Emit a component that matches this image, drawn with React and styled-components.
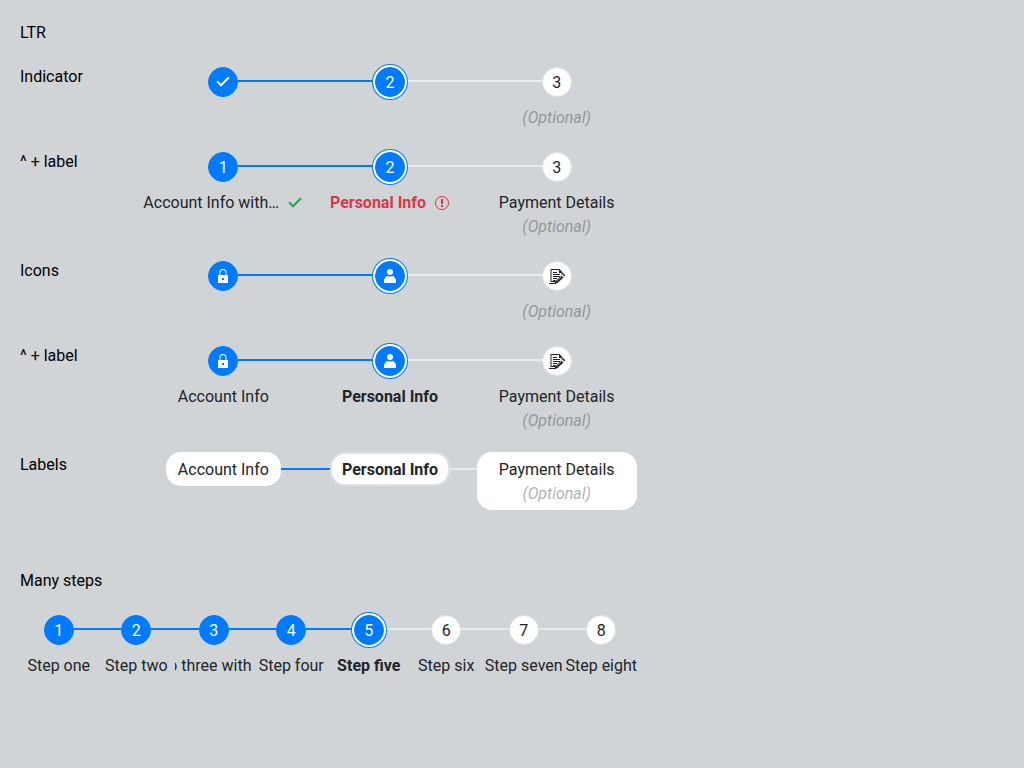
import React from "react";
import styled, { createGlobalStyle, css } from "styled-components";

const color = {
  page: "#d0d4d7",
  primary: "#007bff",
  track: "#e9ecef",
  border: "#dee2e6",
  text: "#212529",
  success: "#28a745",
  error: "#dc3545",
};

const GlobalStyle = createGlobalStyle`
  *, *::before, *::after { box-sizing: border-box; }
  body {
    margin: 0;
    background: ${color.page};
    color: #000;
    font: 16px/24px Roboto, "Liberation Sans", sans-serif;
  }
`;

const Page = styled.main`
  padding: 20px;
`;

const Heading = styled.h2`
  margin: 0 0 18px;
  font-size: 16px;
  font-weight: 400;
  line-height: 26px;
`;

const Row = styled.section`
  display: grid;
  grid-template-columns: 120px minmax(0, 500px);
`;

const RowTitle = styled.h3`
  margin: 0;
  font-size: 16px;
  font-weight: 400;
  line-height: 26px;
`;

const ManySteps = styled.section`
  max-width: 620px;
  margin-top: 58px;
`;

const StepList = styled.ol`
  display: flex;
  margin: 0;
  padding: 0 0 ${(p) => (p.$pills ? 0 : 19)}px;
  list-style: none;
`;

const StepItem = styled.li`
  flex: 1 1 0;
  min-width: 0;
`;

const StepLink = styled.a`
  display: flex;
  flex-direction: column;
  align-items: center;
  color: ${color.text};
  text-decoration: none;
`;

const StepHead = styled.span`
  display: flex;
  align-items: flex-start;
  align-self: stretch;
`;

const Track = styled.span`
  flex: 1;
  height: 2px;
  margin-top: 16px;
  background: ${(p) =>
    p.$state === "none" ? "transparent" : p.$state === "done" ? color.primary : color.track};
`;

const Indicator = styled.span`
  display: flex;
  flex: none;
  align-items: center;
  justify-content: center;
  width: 30px;
  height: 30px;
  margin-top: 3px;
  border: 1px solid ${(p) => (p.$filled ? color.primary : color.border)};
  border-radius: 50%;
  background: ${(p) => (p.$filled ? color.primary : "#fff")};
  color: ${(p) => (p.$filled ? "#fff" : color.text)};
  ${(p) =>
    p.$current &&
    css`
      z-index: 1;
      box-shadow: 0 0 0 2px #fff, 0 0 0 3px ${color.primary};
    `}
`;

const StepNumber = styled.span`
  padding-top: 2px;
`;

const Captions = styled.span`
  display: flex;
  flex-direction: column;
  align-items: center;
  width: 100%;
  max-width: 160px;
  margin-top: 9px;
  overflow: hidden;
`;

const Label = styled.span`
  display: flex;
  align-items: center;
  justify-content: center;
  gap: 8px;
  max-width: 100%;
  white-space: nowrap;
  font-weight: ${(p) => (p.$current ? 700 : 400)};
  color: ${(p) => (p.$error ? color.error : "inherit")};
`;

const LabelText = styled.span`
  ${(p) =>
    p.$ellipsis &&
    css`
      min-width: 0;
      overflow: hidden;
      text-overflow: ellipsis;
    `}
`;

const Optional = styled.span`
  font-style: oblique 20deg;
  opacity: 0.35;
`;

const Pill = styled.span`
  display: flex;
  flex: none;
  flex-direction: column;
  align-items: center;
  width: ${(p) => (p.$wide ? "160px" : "auto")};
  padding: 4px 10px 2px;
  border: 2px solid ${(p) => (p.$current ? color.border : "#fff")};
  border-radius: 15px;
  background: #fff;
`;

const Svg = styled.svg`
  display: block;
  flex: none;
  width: 16px;
  height: 16px;
  color: ${(p) => p.$color || "inherit"};
`;

const glyphs = {
  check: <path d="M2 7.300 6 11.300 14 3.300" fill="none" stroke="currentColor" strokeWidth="2" />,
  lock: (
    <path
      fill="currentColor"
      fillRule="evenodd"
      d="M3 7h1.500V4.500C4.500 2.300 5.800 1 8 1s3.500 1.300 3.500 3.500V7H13v8H3zM5.500 7h5V4.500C10.500 3 9.500 2 8 2S5.500 3 5.500 4.500zM7 10v2h2v-2z"
    />
  ),
  user: (
    <g fill="currentColor">
      <circle cx="8" cy="4" r="3" />
      <path d="M2 15v-2c0-3 2-5 4-5 1 .7 3 .7 4 0 2 0 4 2 4 5v2z" />
    </g>
  ),
  form: (
    <g fill="none" stroke="currentColor">
      <path d="M0 15.500h7M2 13.500h4M2 14V1.500H10.500L13 4.500v2" />
      <path d="M10 1l3.500 4H10z" fill="currentColor" stroke="none" />
      <path d="M4 4.500h4M4 6.500h7M4 8.500h7M4 10.500h4M4 12.500h2" />
      <path d="M13.500 8.500 8 13.500" strokeWidth="3" />
      <path d="m13 6 1-1 2.500 2.500-1 1zM5.500 15.500l1-3.500 3 3z" fill="currentColor" stroke="none" />
      <path d="M12.500 8.500 8 12.800" stroke="#fff" strokeWidth=".5" />
    </g>
  ),
  error: (
    <g fill="none" stroke="currentColor">
      <circle cx="8" cy="8" r="6.500" />
      <path d="M8 4v5M8 10v2" strokeWidth="2" />
    </g>
  ),
};

function Icon({ name, tint }) {
  return (
    <Svg viewBox="0 0 16 16" $color={tint} aria-hidden="true">
      {glyphs[name]}
    </Svg>
  );
}

function Stepper({ steps, current, mode = "indicator", showLabels = false, name }) {
  const pills = mode === "label";
  return (
    <StepList $pills={pills} aria-label={name}>
      {steps.map((step, i) => {
        const isCurrent = i === current;
        const caption = (
          <Label $current={isCurrent} $error={step.status === "error"}>
            <LabelText $ellipsis={Boolean(step.status)}>{step.label}</LabelText>
            {step.status === "valid" && <Icon name="check" tint={color.success} />}
            {step.status === "error" && <Icon name="error" />}
          </Label>
        );
        const optional = step.optional && <Optional>(Optional)</Optional>;
        return (
          <StepItem key={step.label}>
            <StepLink
              href="#"
              aria-label={step.label}
              aria-current={isCurrent ? "step" : undefined}
            >
              <StepHead>
                <Track $state={i === 0 ? "none" : i <= current ? "done" : "todo"} />
                {pills ? (
                  <Pill $current={isCurrent} $wide={step.optional}>
                    {caption}
                    {optional}
                  </Pill>
                ) : (
                  <Indicator $filled={i <= current} $current={isCurrent}>
                    {step.icon ? <Icon name={step.icon} /> : <StepNumber>{i + 1}</StepNumber>}
                  </Indicator>
                )}
                <Track $state={i === steps.length - 1 ? "none" : i < current ? "done" : "todo"} />
              </StepHead>
              {!pills && (showLabels || optional) && (
                <Captions>
                  {showLabels && caption}
                  {optional}
                </Captions>
              )}
            </StepLink>
          </StepItem>
        );
      })}
    </StepList>
  );
}

const account = { label: "Account Info" };
const personal = { label: "Personal Info" };
const payment = { label: "Payment Details", optional: true };

const iconSteps = [
  { ...account, icon: "lock" },
  { ...personal, icon: "user" },
  { ...payment, icon: "form" },
];

const rows = [
  { title: "Indicator", steps: [{ ...account, icon: "check" }, personal, payment] },
  {
    title: "^ + label",
    showLabels: true,
    steps: [
      { label: "Account Info with long label", status: "valid" },
      { ...personal, status: "error" },
      payment,
    ],
  },
  { title: "Icons", steps: iconSteps },
  { title: "^ + label", showLabels: true, steps: iconSteps },
  { title: "Labels", mode: "label", steps: [account, personal, payment] },
];

const manySteps = [
  "Step one",
  "Step two",
  "Step three with text",
  "Step four",
  "Step five",
  "Step six",
  "Step seven",
  "Step eight",
].map((label) => ({ label }));

export default function App() {
  return (
    <>
      <GlobalStyle />
      <Page>
        <Heading>LTR</Heading>
        {rows.map((row, i) => (
          <Row key={i}>
            <RowTitle>{row.title}</RowTitle>
            <Stepper
              name={row.title}
              steps={row.steps}
              current={1}
              mode={row.mode}
              showLabels={row.showLabels}
            />
          </Row>
        ))}
        <ManySteps>
          <Heading>Many steps</Heading>
          <Stepper name="Many steps" steps={manySteps} current={4} showLabels />
        </ManySteps>
      </Page>
    </>
  );
}
